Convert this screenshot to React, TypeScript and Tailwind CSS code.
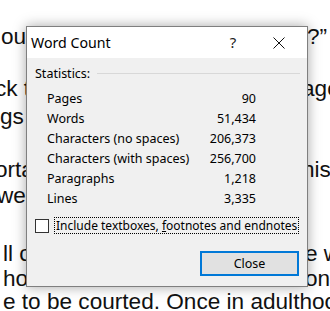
import React from "react";

const rows: [string, string][] = [
  ["Pages", "90"],
  ["Words", "51,434"],
  ["Characters (no spaces)", "206,373"],
  ["Characters (with spaces)", "256,700"],
  ["Paragraphs", "1,218"],
  ["Lines", "3,335"],
];

export default function App() {
  return (
    <div className="relative w-[330px] h-[311px] overflow-hidden bg-white">
      {/* background document text */}
      <div
        className="pt-[24px] text-[22.6px] text-[#111] whitespace-nowrap"
        style={{ fontFamily: '"Liberation Sans", Arial, sans-serif' }}
      >
        <div className="flex h-[26px] leading-[26px]">
          <span className="w-[307px] shrink-0 pl-[1px]">ou</span>
          <span>?”</span>
        </div>
        <div className="flex h-[28px] leading-[26px] mt-[26px]">
          <span className="w-[302px] shrink-0 ml-[-5px]">ck t</span>
          <span className="ml-[5px]">age</span>
        </div>
        <div className="flex h-[26px] leading-[26px]">
          <span className="w-[302px] shrink-0">gs</span>
        </div>
        <div className="flex h-[26px] leading-[26px] mt-[27px]">
          <span className="w-[302px] shrink-0 ml-[-5px]">orta</span>
          <span className="ml-[5px]">his</span>
        </div>
        <div className="flex h-[26px] leading-[26px]">
          <span className="w-[302px] shrink-0 ml-[-3px]">wee</span>
        </div>
        <div className="flex h-[25px] leading-[26px] mt-[32px]">
          <span className="w-[305px] shrink-0 pl-[3px]">ll c</span>
          <span>e w</span>
        </div>
        <div className="flex h-[23px] leading-[26px]">
          <span className="w-[305px] shrink-0 pl-[3px]">ho</span>
          <span>on</span>
        </div>
        <div className="flex h-[26px] leading-[26px] pl-[3px]">
          <span>e to be courted. Once in adulthood</span>
        </div>
      </div>

      {/* Word Count dialog */}
      <div
        className="absolute left-[26px] top-[26px] w-[282px] h-[261px] flex flex-col bg-[#f0f0f0] border border-[#7f7f7f] shadow-[0_0_12px_rgba(0,0,0,0.35)] text-[#000]"
        style={{ fontFamily: '"Noto Sans", "Segoe UI", sans-serif' }}
      >
        {/* title bar */}
        <div className="h-[31px] bg-white flex items-center shrink-0">
          <span className="pl-[4px] text-[14.2px] text-[#000]">Word Count</span>
          <span className="ml-auto w-[46px] flex justify-center text-[15px] text-[#222]">?</span>
          <span className="w-[46px] mr-[5px] flex justify-center">
            <svg width="12" height="12" viewBox="0 0 12 12">
              <path d="M0.5 0.5 L11.5 11.5 M11.5 0.5 L0.5 11.5" stroke="#111" strokeWidth="1" fill="none" />
            </svg>
          </span>
        </div>

        {/* body */}
        <div className="flex flex-col pl-[8px] pr-[7px] pt-[8px] text-[12.5px]">
          <div className="flex items-center h-[17px]">
            <span>Statistics:</span>
            <div className="flex-1 ml-[7px] border-t border-[#d8d8d8] mt-[-2px]" />
          </div>

          <div className="grid grid-cols-[1fr_auto] w-[209px] ml-[12px] mt-[5.5px]">
            {rows.map(([k, v]) => (
              <React.Fragment key={k}>
                <span className="h-[20px] leading-[20px]">{k}</span>
                <span className="h-[20px] leading-[20px] text-right">{v}</span>
              </React.Fragment>
            ))}
          </div>

          <div className="flex items-center mt-[8.5px] h-[17px] whitespace-nowrap">
            <span className="w-[14px] h-[14px] border border-[#333] bg-white shrink-0" />
            <span className="ml-[5px] h-[17px] leading-[15px] px-[1px] border border-dotted border-[#000] text-[12px] shrink-0">
              Include textboxes, <span className="underline">f</span>ootnotes and endnotes
            </span>
          </div>

          <div className="flex justify-end mt-[16.5px] pr-[1px]">
            <button className="w-[99px] h-[25px] border-2 border-[#0078d7] bg-[#e1e1e1] text-[12.5px] leading-[21px] text-[#000]">
              Close
            </button>
          </div>
        </div>
      </div>
    </div>
  );
}
